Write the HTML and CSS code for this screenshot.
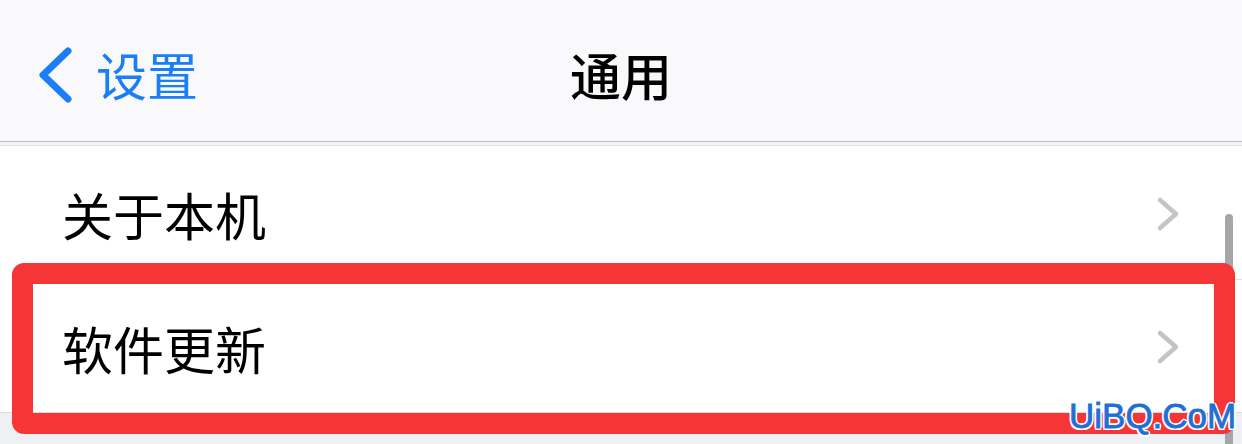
FILE: index.html
```html
<!DOCTYPE html>
<html lang="zh-CN">
<head>
    <meta charset="UTF-8">
    <meta name="viewport" content="width=device-width, initial-scale=1.0">
    <title>通用</title>
    <link rel="stylesheet" href="styles.css">
</head>
<body>

<div id="screen">
    <div id="navbar">
        <div class="back">
            <svg width="34" height="56" viewBox="0 0 34 56">
                <polyline points="30,4 5,28 30,52" fill="none" stroke="#1a7ef7" stroke-width="7" stroke-linecap="round" stroke-linejoin="round"/>
            </svg>
            <span>设置</span>
        </div>
        <div class="title">通用</div>
        <div></div>
    </div>

    <div id="gap"></div>

    <div id="list">
        <div class="row">
            <span class="label">关于本机</span>
            <svg class="chev" width="24" height="36" viewBox="0 0 24 36">
                <polyline points="4,4 20,18 4,32" fill="none" stroke="#c4c4c7" stroke-width="4.5" stroke-linecap="round" stroke-linejoin="round"/>
            </svg>
        </div>
        <div class="row">
            <span class="label">软件更新</span>
            <svg class="chev" width="24" height="36" viewBox="0 0 24 36">
                <polyline points="4,4 20,18 4,32" fill="none" stroke="#c4c4c7" stroke-width="4.5" stroke-linecap="round" stroke-linejoin="round"/>
            </svg>
        </div>
    </div>

    <div id="scrollbar"></div>
    <div id="highlight"></div>
    <div id="mark">UiBQ.CoM</div>
</div>

</body>
</html>
```

FILE: styles.css
```css
* {
    margin: 0;
    padding: 0;
    box-sizing: border-box;
    font-family: "Noto Sans CJK SC", "Noto Sans", sans-serif;
}

body {
    background: #eff0f4;
}

#screen {
    position: relative;
    width: 1242px;
    height: 444px;
    overflow: hidden;
    background: #eff0f4;
}

#navbar {
    height: 142px;
    padding-top: 8px;
    display: grid;
    grid-template-columns: 1fr auto 1fr;
    align-items: center;
    background: #f9f9fb;
    border-bottom: 1px solid #bdbdc1;
}

#navbar .back {
    display: flex;
    align-items: center;
    gap: 24px;
    padding-left: 38px;
    color: #1a7ef7;
    font-size: 51px;
    line-height: 1;
}

#navbar .back svg {
    display: block;
}

#navbar .title {
    font-size: 51px;
    font-weight: 500;
    line-height: 1;
    color: #000;
}

#gap {
    height: 4px;
    background: #f4f4f7;
    border-bottom: 1px solid #e3e3e7;
}

#list {
    background: #fff;
    border-bottom: 1px solid #dcdce0;
}

.row {
    height: 134px;
    margin-left: 62px;
    padding-right: 62px;
    display: flex;
    align-items: center;
    justify-content: space-between;
    border-bottom: 1px solid #e0e0e4;
}

.row:last-child {
    height: 132px;
    border-bottom: none;
}

.row .label {
    font-size: 51px;
    line-height: 1;
    color: #000;
    padding-top: 4px;
}

.chev {
    display: block;
    margin-top: 2px;
}

/* overlays */
#scrollbar {
    position: absolute;
    left: 1225px;
    top: 214px;
    width: 8px;
    height: 260px;
    border-radius: 4px;
    background: #a6a6a8;
}

#highlight {
    position: absolute;
    left: 12px;
    top: 263px;
    width: 1223px;
    height: 171px;
    border: 21px solid #f53536;
    border-radius: 12px;
}

#mark {
    position: absolute;
    left: 1069px;
    top: 398px;
    font-family: "Liberation Sans", sans-serif;
    font-size: 35px;
    line-height: 1;
    color: #1f6fd6;
    -webkit-text-stroke: 0.8px #1f6fd6;
    text-shadow:
        2px 0 0 #fff, -2px 0 0 #fff, 0 2px 0 #fff, 0 -2px 0 #fff,
        1.5px 1.5px 0 #fff, -1.5px 1.5px 0 #fff, 1.5px -1.5px 0 #fff, -1.5px -1.5px 0 #fff;
}
```
